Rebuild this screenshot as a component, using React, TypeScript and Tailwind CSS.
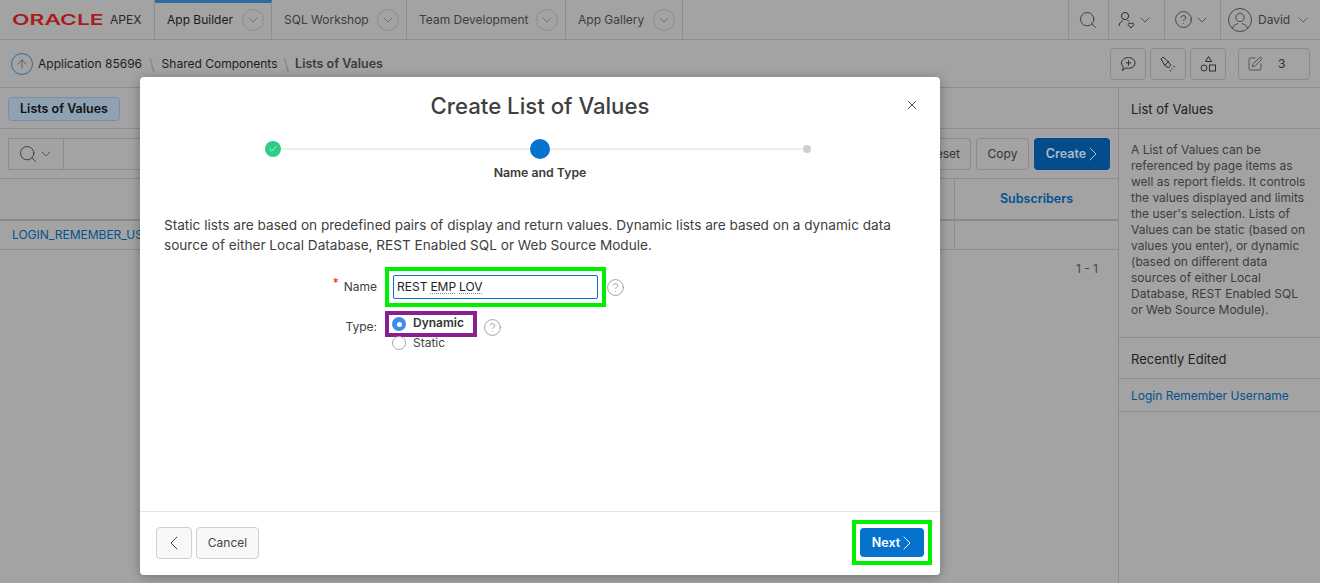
import { ArrowUp, Check, ChevronDown, ChevronLeft, ChevronRight, CircleHelp, Search, SquarePen, X } from "lucide-react";

const tabs = [
  { label: "App Builder", active: true, width: "w-[117px]" },
  { label: "SQL Workshop", active: false, width: "w-[135px]" },
  { label: "Team Development", active: false, width: "w-[159px]" },
  { label: "App Gallery", active: false, width: "w-[117px]" },
];

function Tab(props: { label: string; active: boolean; width: string }) {
  const { label, active, width } = props;
  return (
    <div
      className={`${width} h-10 flex items-center justify-between pl-3 pr-[7px] border-r border-[#8e8e8e] text-xs ${
        active ? "border-t-[3px] border-t-[#2c6ca3] text-[#1a1a1a] pb-[3px]" : "text-[#3d3d3d]"
      }`}
    >
      <span>{label}</span>
      <span className="w-[22px] h-[22px] rounded-full border border-[#8e8e8e] flex items-center justify-center">
        <ChevronDown size={16} strokeWidth={1} className="text-[#555]" />
      </span>
    </div>
  );
}

function ToolButton(props: { children: React.ReactNode }) {
  return (
    <div className="w-9 h-8 border border-[#8a8a8a] rounded-sm flex items-center justify-center text-[#2e2e2e]">
      {props.children}
    </div>
  );
}

function Header() {
  return (
    <div className="h-10 flex items-stretch border-b border-[#8e8e8e]">
      <div className="w-[155px] flex items-center pl-3 border-r border-[#8e8e8e]">
        <span className="w-[93px] text-[#a81c1c] text-[15px] leading-none font-semibold [transform:scaleX(1.52)] origin-left">
          ORACLE
        </span>
        <span className="ml-[5px] text-xs text-[#2a2a2a]">APEX</span>
      </div>
      {tabs.map((t) => (
        <Tab key={t.label} {...t} />
      ))}
      <div className="flex-1" />
      <div className="w-10 flex items-center justify-center pr-[1px] border-l border-[#8e8e8e]">
        <Search size={20} strokeWidth={1} className="text-[#2e2e2e]" />
      </div>
      <div className="w-14 flex items-center justify-center pr-[3px] border-l border-[#8e8e8e] text-[#2e2e2e]">
        <svg width="18" height="18" viewBox="0 0 18 18" fill="none" stroke="currentColor" strokeWidth="1">
          <circle cx="7" cy="5" r="3.6" />
          <path d="M1 15c.3-3 2-4.800 4-5.200M9.500 9.500c.7.200 1.200.5 1.700.9" />
          <path d="M13 17l-2.600-3c-.9-1.300 1-2.800 2.600-1.200 1.600-1.600 3.500-.1 2.600 1.200z" />
        </svg>
        <ChevronDown size={16} strokeWidth={1} className="text-[#2e2e2e] ml-[1px]" />
      </div>
      <div className="w-14 flex items-center justify-center pr-[2px] border-l border-[#8e8e8e] text-[#2e2e2e]">
        <CircleHelp size={19} strokeWidth={1} />
        <ChevronDown size={16} strokeWidth={1} className="ml-[1px]" />
      </div>
      <div className="w-[100px] flex items-center pl-[7px] border-l border-[#8e8e8e] text-[#3d3d3d]">
        <svg width="24" height="24" viewBox="0 0 24 24" fill="none" stroke="currentColor" strokeWidth="0.9">
          <circle cx="12" cy="12" r="11.500" />
          <circle cx="12" cy="9.500" r="4.200" />
          <path d="M4.500 20.500c.6-3.500 3.400-4 5.500-5M19.500 20.500c-.6-3.500-3.400-4-5.500-5" />
        </svg>
        <span className="ml-[6px] text-xs">David</span>
        <ChevronDown size={16} strokeWidth={1} className="ml-[5px]" />
      </div>
    </div>
  );
}

function Breadcrumb() {
  return (
    <div className="h-12 flex items-center justify-between pl-[11px] pr-[10px] border-b border-[#8e8e8e] text-xs">
      <div className="flex items-center text-[#1d1d1d]">
        <span className="w-[22px] h-[22px] rounded-full border border-[#2c6ca3] flex items-center justify-center mr-[5px]">
          <ArrowUp size={14} strokeWidth={1} className="text-[#333]" />
        </span>
        <span>Application 85696</span>
        <span className="mx-[7px] text-[#7d7d7d] text-base leading-none font-light">\</span>
        <span>Shared Components</span>
        <span className="mx-[6px] text-[#7d7d7d] text-base leading-none font-light">\</span>
        <span className="text-[12.500px] leading-4 font-semibold text-[#3b3b3b]">Lists of Values</span>
      </div>
      <div className="flex items-center gap-1">
        <ToolButton>
          <svg width="18" height="18" viewBox="0 0 18 18" fill="none" stroke="currentColor" strokeWidth="1">
            <path d="M9.500 2.500c3.600 0 6.500 2.400 6.500 5.400s-2.900 5.400-6.500 5.400c-.9 0-1.700-.1-2.500-.4L3.500 15.500l.8-3.700C3 10.800 2.500 9.400 2.500 7.900c0-3 3.400-5.400 7-5.400z" />
            <path d="M9.500 5.200v5.400M6.800 7.900h5.400" />
          </svg>
        </ToolButton>
        <ToolButton>
          <svg width="18" height="18" viewBox="0 0 18 18" fill="none" stroke="currentColor" strokeWidth="1">
            <path d="M2 4l2-2 5 4.500 2.800 3.800-2.500 2.500-3.800-2.800z" />
            <path d="M5.500 10.500l4.500-4.500" />
            <path d="M12.500 13.500l1 1M14.500 11.500l2 .5M11 15l.5 2" strokeDasharray="1.500 1" />
          </svg>
        </ToolButton>
        <ToolButton>
          <svg width="18" height="18" viewBox="0 0 18 18" fill="none" stroke="currentColor" strokeWidth="1">
            <path d="M9.500 1.500l3 5h-6z" />
            <circle cx="5" cy="13" r="3" />
            <rect x="10.500" y="10" width="6" height="6" />
          </svg>
        </ToolButton>
        <div className="ml-2 w-[72px] h-8 border border-[#8a8a8a] rounded-sm flex items-center pl-2 gap-[15px] text-[#2e2e2e]">
          <SquarePen size={16} strokeWidth={1} />
          <span>3</span>
        </div>
      </div>
    </div>
  );
}

function MainPanel() {
  return (
    <div className="flex-1 flex flex-col">
      <div className="h-[41px] flex items-center pl-2 pt-[1px] border-b border-[#8e8e8e]">
        <span className="w-[112px] h-6 flex items-center justify-center bg-[#8ea2b3] border border-[#7a8e9f] rounded-sm text-[12.500px] leading-4 font-semibold text-[#111]">
          Lists of Values
        </span>
      </div>
      <div className="h-[50px] flex items-center pl-2 pr-2 border-b border-[#8e8e8e]">
        <div className="w-14 h-8 border border-[#8a8a8a] flex items-center justify-center text-[#2e2e2e]">
          <Search size={20} strokeWidth={1} />
          <ChevronDown size={16} strokeWidth={1} />
        </div>
        <div className="flex-1 h-8 border-y border-[#8a8a8a]" />
        <div className="ml-[6px] w-[54px] h-8 border border-[#8a8a8a] rounded-sm flex items-center justify-center text-xs text-[#333]">
          Reset
        </div>
        <div className="ml-[5px] w-[53px] h-8 border border-[#8a8a8a] rounded-sm flex items-center justify-center text-xs text-[#333]">
          Copy
        </div>
        <div className="ml-[5px] w-[76px] h-8 pl-[7px] bg-[#044c8a] rounded-sm flex items-center justify-center text-[12.500px] leading-4 font-semibold text-[#a9bccd]">
          Create
          <ChevronRight size={24} strokeWidth={1} className="-ml-[5px]" />
        </div>
      </div>
      <div className="h-[42px] flex border-b-2 border-[#8a8a8a]">
        <div className="flex-1" />
        <div className="w-[164px] border-l border-[#8e8e8e] flex items-center justify-center text-[12.500px] leading-4 font-semibold text-[#04528f]">
          Subscribers
        </div>
      </div>
      <div className="h-[29px] flex border-b border-[#8e8e8e]">
        <div className="flex-1 pl-3 flex items-center text-xs text-[#04528f]">LOGIN_REMEMBER_US</div>
        <div className="w-[164px] border-l border-[#8e8e8e]" />
      </div>
      <div className="pt-[11px] pr-5 text-right text-xs leading-4 text-[#4a4a4a]">1 - 1</div>
    </div>
  );
}

function Sidebar() {
  return (
    <div className="w-[202px] border-l border-[#8e8e8e] text-xs">
      <div className="h-[41px] flex items-center pl-3 pt-[3px] border-b border-[#8e8e8e] text-[13px] text-[#222]">List of Values</div>
      <div className="h-[209px] pl-3 pr-[14px] pt-[13px] leading-4 text-[#3d3d3d] border-b border-[#8e8e8e]">
        A List of Values can be referenced by page items as well as report fields. It controls the values displayed and
        limits the user's selection. Lists of Values can be static (based on values you enter), or dynamic (based on
        different data sources of either Local Database, REST Enabled SQL or Web Source Module).
      </div>
      <div className="h-[41px] flex items-center pl-3 pt-[3px] border-b border-[#8e8e8e] text-[13px] text-[#222]">Recently Edited</div>
      <div className="h-[33px] flex items-center pl-3 pt-[1px] border-b border-[#8e8e8e] text-[#04528f]">Login Remember Username</div>
    </div>
  );
}

function Steps() {
  return (
    <div className="flex flex-col items-center mt-[17px]">
      <div className="w-[546px] h-5 mr-[4px] flex items-center">
        <span className="w-4 h-4 rounded-full bg-[#2ecc85] flex items-center justify-center text-white">
          <Check size={10} strokeWidth={1.5} />
        </span>
        <span className="w-[249px] h-0.5 bg-[#eeeeee]" />
        <span className="w-5 h-5 rounded-full bg-[#0572ce]" />
        <span className="w-[253px] h-0.5 bg-[#eeeeee]" />
        <span className="w-2 h-2 rounded-full bg-[#cfcfcf]" />
      </div>
      <div className="mt-[6px] text-[12.300px] leading-4 font-semibold text-[#3b3b3b]">Name and Type</div>
    </div>
  );
}

function Dialog() {
  return (
    <div className="absolute left-[140px] top-[77px] w-[800px] h-[498px] bg-white rounded-sm shadow-[0_2px_12px_rgba(0,0,0,0.3)] flex flex-col">
      <div className="relative h-[45px] flex items-end justify-center">
        <h1 className="text-[22.200px] leading-8 font-medium text-[#3f3f3f]">Create List of Values</h1>
        <X size={14} strokeWidth={1.5} className="absolute right-[21px] top-[21px] text-[#333]" />
      </div>
      <Steps />
      <div className="flex-1 px-6">
        <p className="mt-[34px] text-[13.600px] leading-5 text-[#404040]">
          Static lists are based on predefined pairs of display and return values. Dynamic lists are based on a dynamic
          data source of either Local Database, REST Enabled SQL or Web Source Module.
        </p>
        <div className="mt-[12px] flex items-center">
          <div className="w-[221px] pr-[8px] text-right text-xs text-[#404040]">
            <span className="relative -top-[4px] mr-[5px] text-[#ff2020]">*</span>Name
          </div>
          <div className="w-[221px] h-[40px] border-4 border-[#00f000] p-1">
            <div className="h-full border border-[#0572ce] rounded-[2px] pl-[3px] flex items-center gap-[3px] text-xs text-[#222]">
              <span>REST</span>
              <span className="underline decoration-dotted decoration-[#8a8a8a] underline-offset-2">EMP</span>
              <span className="underline decoration-dotted decoration-[#8a8a8a] underline-offset-2">LOV</span>
            </div>
          </div>
          <CircleHelp size={19} strokeWidth={1} className="text-[#8a8a8a]" />
        </div>
        <div className="mt-1 flex items-start">
          <div className="w-[221px] pr-[8px] pt-[8px] text-right text-xs leading-4 text-[#404040]">Type:</div>
          <div>
            <div className="w-[92px] h-[26px] border-4 border-[#8a1f8f] pl-[3px] flex items-center gap-[7px]">
              <span className="w-[14px] h-[14px] rounded-full bg-[#3d8bf5] flex items-center justify-center">
                <span className="w-[5px] h-[5px] rounded-full bg-white" />
              </span>
              <span className="mb-[2px] text-xs font-semibold text-[#333]">Dynamic</span>
            </div>
            <div className="h-[14px] mt-[-1px] pl-[7px] flex items-center gap-[7px]">
              <span className="w-[14px] h-[14px] rounded-full bg-white border border-[#a8a8a8]" />
              <span className="text-xs text-[#444]">Static</span>
            </div>
          </div>
          <CircleHelp size={19} strokeWidth={1} className="ml-[6px] mt-[7px] text-[#8a8a8a]" />
        </div>
      </div>
      <div className="h-[64px] border-t border-[#e4e4e4] pl-4 pr-2 flex items-center justify-between">
        <div className="flex items-center gap-1 mb-[1px]">
          <div className="w-9 h-8 bg-[#f8f8f8] border border-[#d0d0d0] rounded-sm flex items-center justify-center text-[#444]">
            <ChevronLeft size={24} strokeWidth={1} />
          </div>
          <div className="w-[63px] h-8 bg-[#f8f8f8] border border-[#d0d0d0] rounded-sm flex items-center justify-center text-xs text-[#444]">
            Cancel
          </div>
        </div>
        <div className="w-[80px] h-[45px] mb-[2px] border-4 border-[#00f000] p-1">
          <div className="h-full pl-[7px] bg-[#0572ce] rounded-sm flex items-center justify-center text-[12.500px] leading-4 font-semibold text-white">
            Next
            <ChevronRight size={24} strokeWidth={1} className="-ml-[5px]" />
          </div>
        </div>
      </div>
    </div>
  );
}

export default function App() {
  return (
    <div className="relative h-[583px] w-[1320px] overflow-hidden bg-[#a3a3a3] font-['Inter',sans-serif]">
      <Header />
      <Breadcrumb />
      <div className="flex h-[495px]">
        <MainPanel />
        <Sidebar />
      </div>
      <Dialog />
    </div>
  );
}
